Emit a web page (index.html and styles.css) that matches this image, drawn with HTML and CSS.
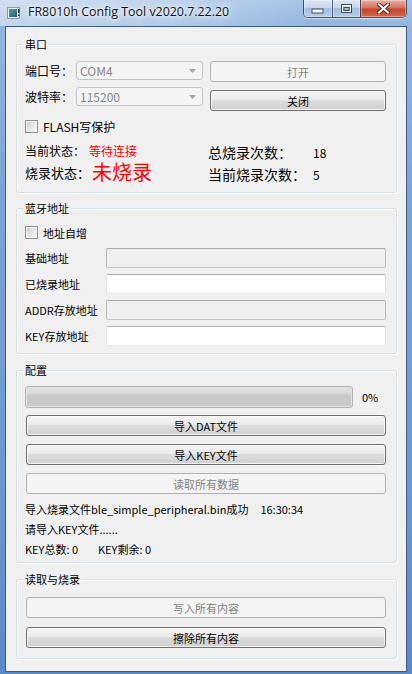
FILE: index.html
```html
<!DOCTYPE html>
<html>
<head>
<meta charset="utf-8">
<title>FR8010h Config Tool</title>
<link rel="stylesheet" href="styles.css">
</head>
<body>
<div class="window">
  <div class="titlebar">
    <svg class="app-icon" width="14" height="12" viewBox="0 0 14 12">
      <defs>
        <linearGradient id="ig" x1="0" y1="0" x2="1" y2="1">
          <stop offset="0" stop-color="#4fb08a"/>
          <stop offset="1" stop-color="#2b4f98"/>
        </linearGradient>
      </defs>
      <rect x="0.5" y="0.5" width="12" height="11" fill="#f4f6f8" stroke="#8d98a4"/>
      <rect x="2" y="2" width="8" height="8" fill="url(#ig)"/>
      <rect x="11" y="2" width="1.5" height="4" fill="#1c1c1c"/>
      <rect x="11" y="7.5" width="1.5" height="1.5" fill="#1c1c1c"/>
    </svg>
    <span class="title">FR8010h Config Tool v2020.7.22.20</span>
    <div class="caption">
      <div class="cbtn cmin">
        <svg width="14" height="6" viewBox="0 0 14 6"><rect x="1" y="1" width="11" height="4" fill="#fff" stroke="#3c4a5e" stroke-width="1"/></svg>
      </div>
      <div class="cbtn cmax">
        <svg width="12" height="10" viewBox="0 0 12 10"><rect x="0.5" y="0.5" width="10" height="8" fill="none" stroke="#3c4a5e"/><rect x="1.5" y="1.5" width="8" height="6" fill="none" stroke="#fff" stroke-width="1"/><rect x="3" y="3.5" width="5" height="3" fill="none" stroke="#3c4a5e"/></svg>
      </div>
      <div class="cbtn cclose">
        <svg width="13" height="11" viewBox="0 0 13 11"><path d="M2 1.5 L11 9.5 M11 1.5 L2 9.5" stroke="#5a2a22" stroke-width="4" stroke-linecap="square"/><path d="M2 1.5 L11 9.5 M11 1.5 L2 9.5" stroke="#fff" stroke-width="2" stroke-linecap="square"/></svg>
      </div>
    </div>
  </div>

  <div class="client">
    <fieldset class="group g-serial">
      <legend>串口</legend>
      <div class="serial-grid">
        <div class="col-left">
          <div class="field-row">
            <span class="field-lbl">端口号：</span>
            <div class="combo"><span>COM4</span><svg class="arrow" width="8" height="4" viewBox="0 0 8 4"><path d="M0 0 H7 L3.5 4 Z" fill="#a3a3a3"/></svg></div>
          </div>
          <div class="field-row">
            <span class="field-lbl">波特率：</span>
            <div class="combo"><span>115200</span><svg class="arrow" width="8" height="4" viewBox="0 0 8 4"><path d="M0 0 H7 L3.5 4 Z" fill="#a3a3a3"/></svg></div>
          </div>
        </div>
        <div class="col-right">
          <div class="btn disabled">打开</div>
          <div class="btn">关闭</div>
        </div>
      </div>
      <div class="check-row check-flash"><span class="checkbox"></span><span>FLASH写保护</span></div>
      <div class="status">
        <div class="status-left">
          <div class="stat-row"><span class="stat-lbl">当前状态：</span><span class="red">等待连接</span></div>
          <div class="stat-row"><span class="stat-lbl stat-lbl2">烧录状态：</span><span class="red big">未烧录</span></div>
        </div>
        <div class="status-right">
          <div class="cnt-row"><span class="cnt-lbl">总烧录次数：</span><span class="cnt-val">18</span></div>
          <div class="cnt-row"><span class="cnt-lbl">当前烧录次数：</span><span class="cnt-val">5</span></div>
        </div>
      </div>
    </fieldset>

    <fieldset class="group g-addr">
      <legend>蓝牙地址</legend>
      <div class="check-row"><span class="checkbox"></span><span>地址自增</span></div>
      <div class="addr-form">
        <div class="addr-row"><span class="addr-lbl">基础地址</span><div class="input disabled"></div></div>
        <div class="addr-row"><span class="addr-lbl">已烧录地址</span><div class="input"></div></div>
        <div class="addr-row"><span class="addr-lbl">ADDR存放地址</span><div class="input disabled"></div></div>
        <div class="addr-row"><span class="addr-lbl">KEY存放地址</span><div class="input"></div></div>
      </div>
    </fieldset>

    <fieldset class="group g-config">
      <legend>配置</legend>
      <div class="progress-row">
        <div class="progress"></div>
        <span class="pct">0%</span>
      </div>
      <div class="btn-stack stack-config">
        <div class="btn">导入DAT文件</div>
        <div class="btn">导入KEY文件</div>
        <div class="btn disabled">读取所有数据</div>
      </div>
      <div class="log">
        <div class="log-line"><span class="log-msg">导入烧录文件ble_simple_peripheral.bin成功</span><span class="log-time">16:30:34</span></div>
        <div class="log-line">请导入KEY文件......</div>
        <div class="log-line"><span class="key-total">KEY总数: 0</span><span>KEY剩余: 0</span></div>
      </div>
    </fieldset>

    <fieldset class="group g-burn">
      <legend>读取与烧录</legend>
      <div class="btn-stack stack-burn">
        <div class="btn disabled">写入所有内容</div>
        <div class="btn">擦除所有内容</div>
      </div>
    </fieldset>
  </div>
</div>
</body>
</html>
```

FILE: styles.css
```css
* { box-sizing: border-box; }
html, body { margin: 0; padding: 0; }
body {
  width: 412px;
  height: 674px;
  overflow: hidden;
  font-family: "Noto Sans CJK SC", "Noto Sans", sans-serif;
  font-size: 11px;
  color: #000;
}

.window {
  width: 412px;
  height: 674px;
  display: flex;
  flex-direction: column;
  padding: 0 5px 2px 5px;
  background:
    linear-gradient(90deg, rgba(255,255,255,0.45) 0, rgba(255,255,255,0.25) 45%, rgba(255,255,255,0) 75%) top / 100% 26px no-repeat,
    linear-gradient(180deg, #a8c5e7 0, #93b5de 26px, #7ca3d6 200px, #6a97d0 500px, #5a89c7 100%);
}

/* ---------- title bar ---------- */
.titlebar {
  height: 26px;
  flex: none;
  display: flex;
  align-items: flex-start;
}
.app-icon { margin: 7px 0 0 2px; flex: none; }
.title {
  margin: 4px 0 0 7px;
  font-family: "Open Sans", "Noto Sans", sans-serif;
  font-size: 12.4px;
  line-height: 16px;
  color: #111;
  white-space: nowrap;
  text-shadow: 0 0 6px #fff, 0 0 10px rgba(255,255,255,0.9), 0 0 3px rgba(255,255,255,0.9);
}
.caption {
  margin-left: auto;
  display: flex;
  height: 18px;
  border: 1px solid #3f5471;
  border-top: none;
  border-radius: 0 0 5px 5px;
  overflow: hidden;
  box-shadow: 0 1px 0 rgba(255,255,255,0.5);
}
.cbtn {
  height: 17px;
  display: flex;
  align-items: center;
  justify-content: center;
  box-shadow: inset 0 0 0 1px rgba(255,255,255,0.35);
}
.cmin {
  width: 28px;
  background: linear-gradient(180deg, #dbe6f4 0, #c5d6ec 45%, #a4bfe1 50%, #b6cdeb 100%);
  padding-top: 4px;
}
.cmax {
  width: 28px;
  border-left: 1px solid #4c607c;
  background: linear-gradient(180deg, #dbe6f4 0, #c5d6ec 45%, #a4bfe1 50%, #b6cdeb 100%);
}
.cclose {
  width: 46px;
  border-left: 1px solid #5a3a3a;
  background: linear-gradient(180deg, #e9b1a3 0, #d7735e 45%, #c4432b 55%, #d46a52 100%);
}

/* ---------- client ---------- */
.client {
  flex: 1;
  background: #f0f0f0;
  border: 1px solid #3e5c84;
  display: flex;
  flex-direction: column;
}

.group {
  margin: 0 9px 0 10px;
  padding: 9px 10px 11px 8px;
  border: 1px solid #d5dfe5;
  border-radius: 3px;
  box-shadow: inset 1px 1px 0 #fff, 1px 1px 0 #fff;
  min-width: 0;
}
.group legend {
  padding: 0 1px;
  margin-left: -1px;
  height: 15px;
  line-height: 15px;
  font-size: 11px;
}
.g-serial { margin-top: 10px; }
.g-addr { margin-top: 8px; padding-top: 10px; padding-bottom: 7px; }
.g-config { margin-top: 9px; padding-top: 8px; padding-bottom: 4px; }
.g-burn { margin-top: 9px; padding-top: 10px; padding-bottom: 10px; }

/* ---------- serial ---------- */
.serial-grid {
  display: grid;
  grid-template-columns: 178px 176px;
  column-gap: 7px;
}
.col-left { display: flex; flex-direction: column; gap: 7px; font-size: 12px; }
.col-right { display: flex; flex-direction: column; gap: 8px; }
.field-row { display: flex; align-items: center; height: 19px; }
.field-lbl { width: 51px; flex: none; }
.combo {
  width: 127px;
  height: 19px;
  border: 1px solid #c4c4c4;
  border-radius: 3px;
  background: #f4f4f4;
  color: #868686;
  display: flex;
  align-items: center;
  justify-content: space-between;
  padding: 0 5px 0 3px;
}

.btn {
  height: 21px;
  border: 1px solid #707070;
  border-radius: 3px;
  background: linear-gradient(180deg, #f3f3f3 0, #ebebeb 45%, #dddddd 50%, #cfcfcf 100%);
  box-shadow: inset 0 0 0 1px rgba(255,255,255,0.75);
  display: flex;
  align-items: center;
  justify-content: center;
  color: #000;
}
.btn.disabled {
  border-color: #adb2b5;
  background: #f4f4f4;
  box-shadow: none;
  color: #838383;
}

.check-row {
  display: flex;
  align-items: center;
  gap: 5px;
  height: 13px;
}
.check-flash { margin-top: 9px; font-size: 12px; }
.checkbox {
  width: 13px;
  height: 13px;
  flex: none;
  border: 1px solid #8e8f8f;
  background: linear-gradient(135deg, #cbcbcb 0, #e6e6e6 50%, #f7f7f7 100%);
  box-shadow: inset 0 0 0 1px #f4f4f4;
}

.status {
  display: grid;
  grid-template-columns: 183px 1fr;
  height: 40px;
  margin-top: 8px;
}
.status-left { display: flex; flex-direction: column; gap: 4px; font-size: 12px; }
.stat-row { display: flex; align-items: center; height: 18px; }
.stat-lbl { width: 64px; flex: none; }
.stat-lbl2 { width: 67px; font-size: 13px; }
.red { color: #ff0000; }
.big { font-size: 20px; line-height: 18px; }
.status-right { display: flex; flex-direction: column; gap: 4px; padding-top: 2px; }
.cnt-row { display: flex; align-items: center; height: 18px; }
.cnt-lbl { width: 105px; flex: none; font-size: 14px; }
.cnt-val { font-size: 12px; }

/* ---------- address ---------- */
.addr-form {
  display: flex;
  flex-direction: column;
  gap: 6px;
  margin-top: 9px;
}
.addr-row { display: flex; align-items: center; height: 20px; }
.addr-lbl { width: 81px; flex: none; white-space: nowrap; }
.input {
  flex: 1;
  height: 20px;
  border: 1px solid;
  border-color: #abadb3 #dbdfe6 #e3e9ef #e2e3ea;
  border-radius: 2px;
  background: #fff;
}
.input.disabled {
  border-color: #a9a9a9 #b8b8b8 #c4c4c4 #b8b8b8;
  background: #efefef;
}

/* ---------- config ---------- */
.progress-row { display: flex; align-items: center; height: 22px; }
.progress {
  width: 328px;
  height: 22px;
  flex: none;
  border: 1px solid #b2b2b2;
  border-radius: 3px;
  background: linear-gradient(180deg, #e2e2e2 0, #dadada 30%, #c9c9c9 40%, #c8c8c8 85%, #cfcfcf 100%);
  box-shadow: inset 0 0 0 1px #e4e4e4;
}
.pct { margin-left: 9px; }

.btn-stack {
  display: flex;
  flex-direction: column;
  padding-left: 1px;
}
.stack-config { gap: 8px; margin-top: 7px; }
.stack-burn { gap: 9px; }

.log {
  display: flex;
  flex-direction: column;
  gap: 1px;
  margin-top: 5px;
}
.log-line {
  height: 19px;
  display: flex;
  align-items: center;
  white-space: pre;
}
.log-time { margin-left: 12px; }
.key-total { width: 73px; flex: none; }
```
